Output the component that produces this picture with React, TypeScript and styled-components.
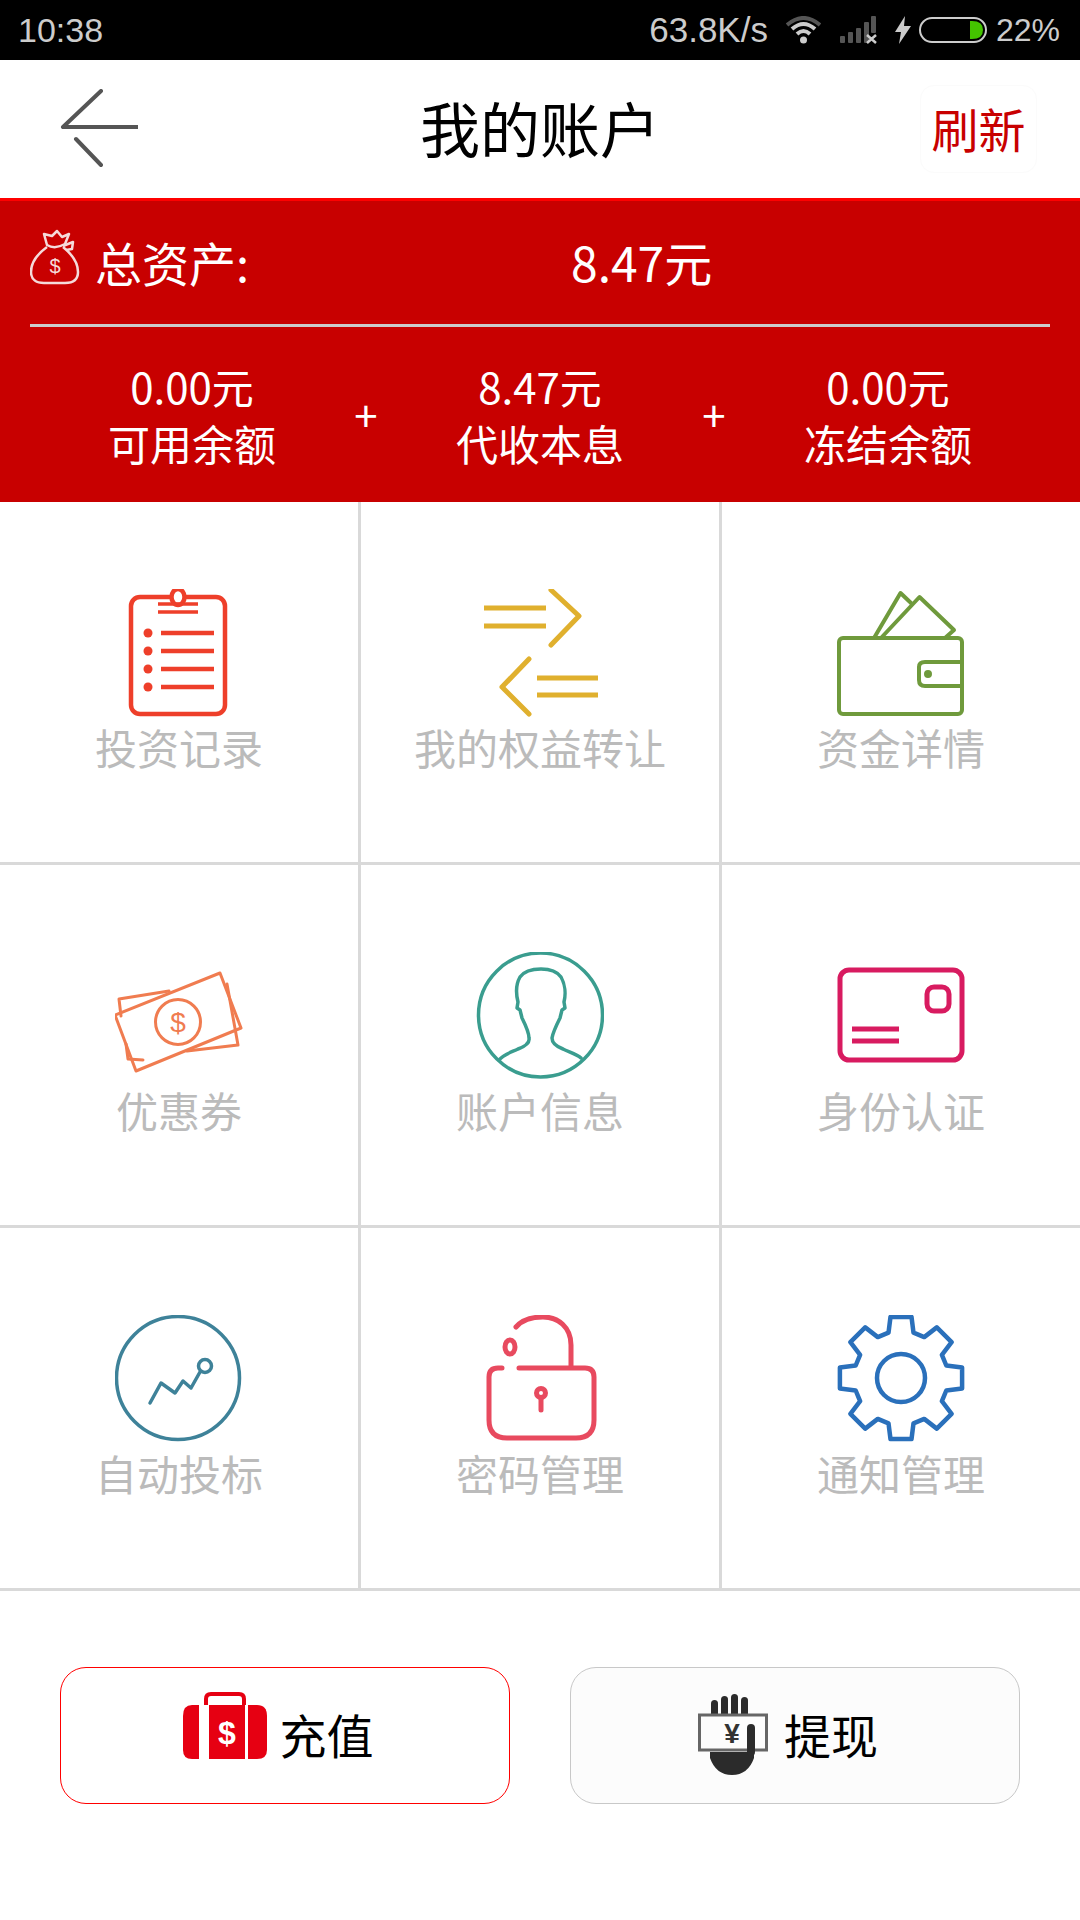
import React from "react";
import styled, { createGlobalStyle } from "styled-components";

const Global = createGlobalStyle`
  html, body { margin: 0; padding: 0; background: #fff; }
  body { font-family: "Noto Sans CJK SC", "Liberation Sans", sans-serif; }
  * { box-sizing: border-box; }
`;

const Page = styled.div`
  width: 1080px;
  height: 1920px;
  background: #fff;
  overflow: hidden;
`;

const StatusBar = styled.div`
  height: 60px;
  background: #000;
  color: #ccc;
  display: flex;
  align-items: center;
  padding: 0 20px 0 18px;
  font-family: "Liberation Sans", sans-serif;
  font-size: 34px;
`;
const StatusTime = styled.span`
  margin-right: auto;
`;
const StatusSpeed = styled.span`
  font-size: 35px;
  margin-right: 18px;
`;
const StatusIcon = styled.svg`
  display: block;
  flex: none;
  margin-right: ${(p) => p.$mr ?? 0}px;
`;
const StatusPercent = styled.span`
  font-size: 32px;
  margin-left: 9px;
`;

const Nav = styled.div`
  height: 138px;
  background: #fff;
  display: grid;
  grid-template-columns: 1fr auto 1fr;
  align-items: center;
  padding: 0 43px;
`;
const BackButton = styled.svg`
  display: block;
  margin-left: 15px;
`;
const Title = styled.div`
  font-size: 60px;
  line-height: 1;
  color: #000;
  padding-bottom: 5px;
`;
const Refresh = styled.div`
  justify-self: end;
  width: 117px;
  height: 88px;
  border: 1px solid #fbfbfb;
  border-radius: 14px;
  display: flex;
  align-items: center;
  justify-content: center;
  padding-bottom: 4px;
  font-size: 47px;
  color: #c80000;
`;

const Panel = styled.section`
  height: 304px;
  background: #c80000;
  border-top: 3px solid #f00;
  color: #fff;
  padding: 0 30px;
`;
const TotalRow = styled.div`
  height: 126px;
  display: flex;
  align-items: center;
  border-bottom: 3px solid #ccc;
`;
const BagIcon = styled.svg`
  display: block;
  flex: none;
  margin-top: -12px;
`;
const TotalLabel = styled.span`
  font-size: 47px;
  line-height: 1;
  margin-left: 15px;
  width: 156px;
  padding-bottom: 2px;
`;
const TotalAmount = styled.span`
  font-size: 48px;
  line-height: 1;
  margin-left: 320px;
  padding-bottom: 4px;
`;
const StatsRow = styled.div`
  display: flex;
  align-items: center;
  padding: 30px 12px 0;
`;
const Stat = styled.div`
  width: 300px;
  text-align: center;
  font-size: 42px;
  line-height: 57px;
`;
const Plus = styled.div`
  width: 48px;
  text-align: center;
  font-size: 42px;
  line-height: 1;
`;

const Grid = styled.div`
  display: grid;
  grid-template-columns: 361px 361px 358px;
  grid-auto-rows: 363px;
  width: 1080px;
`;
const Cell = styled.div`
  display: flex;
  flex-direction: column;
  align-items: center;
  padding-top: 87px;
  border-bottom: 3px solid #d9d9d9;
  border-right: ${(p) => (p.$last ? "none" : "3px solid #d9d9d9")};
`;
const CellIcon = styled.svg`
  display: block;
  flex: none;
`;
const CellLabel = styled.div`
  margin-top: 8px;
  font-size: 42px;
  line-height: 44px;
  color: #bbb;
  white-space: nowrap;
`;

const Actions = styled.div`
  display: flex;
  gap: 60px;
  padding: 76px 60px 0;
`;
const ActionButton = styled.div`
  width: 450px;
  height: 137px;
  display: flex;
  align-items: center;
  justify-content: center;
  gap: ${(p) => p.$gap}px;
  padding-right: 14px;
  border-radius: 26px;
  border: 1px solid ${(p) => (p.$primary ? "#f00" : "#c8c8c8")};
  background: ${(p) => (p.$primary ? "#fff" : "#fcfcfc")};
  font-size: 47px;
  color: #000;
`;
const ActionText = styled.span`
  line-height: 1;
  padding-bottom: 4px;
`;
const ActionIcon = styled.svg`
  display: block;
  flex: none;
`;

const gearPoints = (() => {
  const pts: string[] = [];
  const cx = 64;
  const cy = 63;
  const outer = 62;
  const root = 47;
  for (let i = 0; i < 8; i++) {
    const a = (i * Math.PI) / 4 - Math.PI / 2;
    const step = [
      [-0.27, root],
      [-0.17, outer],
      [0.17, outer],
      [0.27, root],
    ];
    step.forEach(([d, r]) => {
      pts.push(`${(cx + r * Math.cos(a + d)).toFixed(1)},${(cy + r * Math.sin(a + d)).toFixed(1)}`);
    });
  }
  return pts.join(" ");
})();

const common = { fill: "none", strokeLinecap: "round" as const, strokeLinejoin: "round" as const };

const icons: Record<string, React.ReactNode> = {
  record: (
    <g {...common} stroke="#ee3f2a" strokeWidth="4.5">
      <rect x="16" y="8" width="94" height="117" rx="9" />
      <ellipse cx="63" cy="8" rx="6.5" ry="8" fill="#fff" />
      <path d="M43 15H83M43 23H83" strokeWidth="3.5" strokeLinecap="butt" />
      <path d="M46 44H99M46 62H99M46 80H99M46 98H99" strokeLinecap="butt" />
      <g fill="#ee3f2a" stroke="none">
        <circle cx="33" cy="44" r="4.5" />
        <circle cx="33" cy="62" r="4.5" />
        <circle cx="33" cy="80" r="4.5" />
        <circle cx="33" cy="98" r="4.5" />
      </g>
    </g>
  ),
  transfer: (
    <g {...common} stroke="#e0b02e" strokeWidth="5">
      <path d="M8 19H70M8 37H70" strokeLinecap="butt" />
      <path d="M75 1L103 27L75 56" />
      <path d="M61 89H122M61 106H122" strokeLinecap="butt" />
      <path d="M53 70L26 98L53 125" />
    </g>
  ),
  wallet: (
    <g {...common} stroke="#6f9a3c" strokeWidth="4">
      <path d="M37 49L63.5 4L74 14" />
      <path d="M44 49L82.5 8L117 41L108 49" />
      <rect x="2" y="49" width="123" height="76" rx="4" fill="none" />
      <path d="M125 73H88Q82 73 82 78V91Q82 97 88 97H125" />
      <circle cx="91" cy="85" r="2" fill="#6f9a3c" />
    </g>
  ),
  coupon: (
    <g {...common} stroke="#f07c50" strokeWidth="3">
      <path d="M6 64L4 47L54 39M112 32L123 93L72 99M11 92L13 107L28 108" />
      <path d="M0 63L105 21L126 76L21 119Z" />
      <circle cx="63" cy="70" r="22.5" />
      <text x="63" y="80" textAnchor="middle" fontSize="28" fontFamily="Liberation Sans" fill="#f07c50" stroke="none">$</text>
    </g>
  ),
  user: (
    <g {...common} stroke="#3a9d8f" strokeWidth="3.5">
      <circle cx="64.5" cy="63" r="62" />
      <path d="M23 108C28 102 36 100 42 97C50 94 54 91 53 86C53 80 50 74 46 66L44 58L41 56L42 50C40 42 40 32 44 25C49 18 58 17 65 17C72 17 80 18 85 25C89 32 90 42 88 50L89 56L86 58L84 66C80 74 77 80 76 86C76 91 79 94 87 97C93 100 101 102 105 106" />
    </g>
  ),
  card: (
    <g {...common} stroke="#d81b60" strokeWidth="5">
      <rect x="3" y="18" width="122" height="90" rx="9" />
      <rect x="90" y="35" width="22" height="24" rx="7" />
      <path d="M15 77H62M15 89H62" strokeLinecap="butt" />
    </g>
  ),
  auto: (
    <g {...common} stroke="#3e8299" strokeWidth="3.5">
      <circle cx="63" cy="63" r="61.5" />
      <path d="M35 88L46 68L60 78L68 66L76 73L85 57" />
      <circle cx="90" cy="51" r="6.5" />
    </g>
  ),
  lock: (
    <g {...common} stroke="#e84a5f" strokeWidth="5">
      <path d="M26 53H22Q13 53 13 62V105Q13 123 31 123H100Q118 123 118 105V62Q118 53 109 53H43" />
      <path d="M95 52V30C95 12 82 2 67 2C56 2 46 5 40 12" />
      <ellipse cx="34" cy="32" rx="5" ry="7" />
      <circle cx="65" cy="78" r="4.5" />
      <path d="M65 83V95" />
    </g>
  ),
  gear: (
    <g {...common} stroke="#2a70bb" strokeWidth="4.5">
      <polygon points={gearPoints} />
      <circle cx="64" cy="63" r="24" />
    </g>
  ),
};

const items = [
  ["record", "投资记录"],
  ["transfer", "我的权益转让"],
  ["wallet", "资金详情"],
  ["coupon", "优惠券"],
  ["user", "账户信息"],
  ["card", "身份认证"],
  ["auto", "自动投标"],
  ["lock", "密码管理"],
  ["gear", "通知管理"],
];

const stats = [
  ["0.00元", "可用余额"],
  ["8.47元", "代收本息"],
  ["0.00元", "冻结余额"],
];

export default function App() {
  return (
    <Page>
      <Global />
      <StatusBar>
        <StatusTime>10:38</StatusTime>
        <StatusSpeed>63.8K/s</StatusSpeed>
        <StatusIcon $mr={19} width="35" height="28" viewBox="0 0 35 28">
          <path d="M1 9Q17.5 -5 34 9" fill="none" stroke="#555" strokeWidth="4" />
          <path d="M6 13Q17.5 3 29 13" fill="none" stroke="#ccc" strokeWidth="4" />
          <path d="M11 18Q17.5 12 24 18" fill="none" stroke="#ccc" strokeWidth="4" />
          <circle cx="17.5" cy="24" r="3.5" fill="#ccc" />
        </StatusIcon>
        <StatusIcon $mr={18} width="37" height="28" viewBox="0 0 37 28">
          <g fill="#555">
            <rect x="0" y="20" width="5" height="7" rx="1" />
            <rect x="8" y="16" width="5" height="11" rx="1" />
            <rect x="16" y="12" width="5" height="15" rx="1" />
            <rect x="24" y="6" width="5" height="21" rx="1" />
            <rect x="31" y="0" width="5" height="17" rx="1" />
          </g>
          <path d="M27 19L36 27M36 19L27 27" stroke="#ccc" strokeWidth="2.5" />
        </StatusIcon>
        <StatusIcon $mr={8} width="16" height="28" viewBox="0 0 16 28">
          <path d="M10 0L0 16H6L4 28L16 10H9Z" fill="#ccc" />
        </StatusIcon>
        <StatusIcon width="68" height="26" viewBox="0 0 68 26">
          <rect x="1" y="1" width="66" height="24" rx="12" fill="none" stroke="#ccc" strokeWidth="2" />
          <path d="M51 4H53Q64 4 64 13Q64 22 53 22H51Z" fill="#44c400" />
        </StatusIcon>
        <StatusPercent>22%</StatusPercent>
      </StatusBar>

      <Nav>
        <BackButton width="80" height="80" viewBox="0 0 80 80">
          <path d="M43 2L5 38H80M18 50L43 76" fill="none" stroke="#555" strokeWidth="4" strokeLinejoin="round" strokeLinecap="round" />
        </BackButton>
        <Title>我的账户</Title>
        <Refresh>刷新</Refresh>
      </Nav>

      <Panel>
        <TotalRow>
          <BagIcon width="50" height="56" viewBox="0 0 50 56">
            <g fill="none" stroke="#f5dada" strokeWidth="2.5" strokeLinejoin="round">
              <path d="M17 18C6 26 1 34 1 43C1 51 7 54 14 54H35C43 54 48 51 48 43C48 34 43 26 33 18" />
              <path d="M14 5L22 7L27 2L32 8L39 5L35 15C28 19 22 19 17 16Z" />
              <path d="M33 17L43 13L42 20L36 21" />
            </g>
            <text x="25" y="44" textAnchor="middle" fontSize="20" fontFamily="Liberation Sans" fill="#f5dada">$</text>
          </BagIcon>
          <TotalLabel>总资产:</TotalLabel>
          <TotalAmount>8.47元</TotalAmount>
        </TotalRow>
        <StatsRow>
          {stats.map(([value, label], i) => (
            <React.Fragment key={label}>
              {i > 0 && <Plus>+</Plus>}
              <Stat>
                <div>{value}</div>
                <div>{label}</div>
              </Stat>
            </React.Fragment>
          ))}
        </StatsRow>
      </Panel>

      <Grid>
        {items.map(([key, label], i) => (
          <Cell key={key} $last={i % 3 === 2}>
            <CellIcon width="128" height="128" viewBox="0 0 128 128">
              {icons[key]}
            </CellIcon>
            <CellLabel>{label}</CellLabel>
          </Cell>
        ))}
      </Grid>

      <Actions>
        <ActionButton $primary $gap={13}>
          <ActionIcon width="84" height="88" viewBox="0 0 84 88">
            <path d="M23 13V7Q23 2 28 2H56Q61 2 61 7V13" fill="none" stroke="#e60012" strokeWidth="4" />
            <path d="M16 13H9Q0 13 0 24V58Q0 67 9 67H16Z" fill="#e60012" />
            <rect x="26" y="13" width="36" height="54" fill="#e60012" />
            <path d="M65 13H74Q84 13 84 24V58Q84 67 74 67H65Z" fill="#e60012" />
            <text x="44" y="52" textAnchor="middle" fontSize="32" fontWeight="700" fontFamily="Liberation Sans" fill="#fff">$</text>
          </ActionIcon>
          <ActionText>充值</ActionText>
        </ActionButton>
        <ActionButton $gap={16}>
          <ActionIcon width="70" height="88" viewBox="0 0 70 88">
            <g fill="#2b2b2b">
              <rect x="13" y="8" width="7" height="18" rx="3.5" />
              <rect x="23" y="4" width="7" height="22" rx="3.5" />
              <rect x="33" y="2" width="7" height="24" rx="3.5" />
              <rect x="43" y="5" width="7" height="21" rx="3.5" />
            </g>
            <rect x="1.5" y="23" width="67" height="35" fill="#fcfcfc" stroke="#666" strokeWidth="3" />
            <path d="M12 60H56V66Q50 83 34 83Q18 83 12 66Z" fill="#2b2b2b" />
            <rect x="49" y="32" width="8" height="32" rx="4" fill="#2b2b2b" />
            <text x="34" y="51" textAnchor="middle" fontSize="28" fontWeight="700" fontFamily="Liberation Sans" fill="#333">¥</text>
          </ActionIcon>
          <ActionText>提现</ActionText>
        </ActionButton>
      </Actions>
    </Page>
  );
}
